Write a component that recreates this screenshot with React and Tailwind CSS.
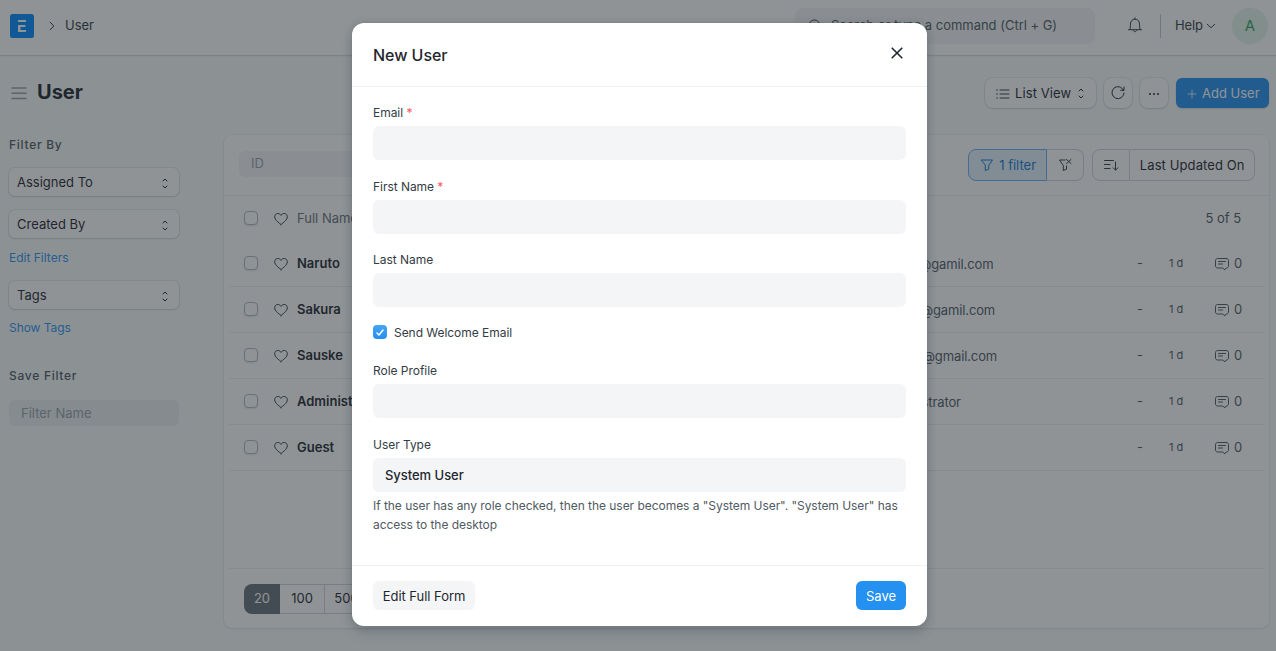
import React from "react";

const users = [
  { name: "Naruto", id: "naruto@gamil.com" },
  { name: "Sakura", id: "sakura@gamil.com" },
  { name: "Sauske", id: "sauske@gmail.com" },
  { name: "Administrator", id: "Administrator" },
  { name: "Guest", id: "" },
];

function Icon({ children, className = "", size = 16, box = "0 0 16 16" }) {
  return (
    <svg
      width={size}
      height={size}
      viewBox={box}
      fill="none"
      stroke="currentColor"
      strokeLinecap="round"
      strokeLinejoin="round"
      className={"shrink-0 " + className}
    >
      {children}
    </svg>
  );
}

const SelectIcon = ({ className }) => (
  <Icon className={className} size={12} box="0 0 12 12">
    <path d="M4 4L6 2l2 2M4 9l2 2 2-2" />
  </Icon>
);

const Heart = () => (
  <Icon className="text-[#333c44]">
    <path d="M8 13.500C6 11.800 1.700 9.200 1.700 5.700C1.700 3.700 3.100 2.500 4.800 2.500C6.200 2.500 7.300 3.100 8 4.400C8.700 3.100 9.800 2.500 11.200 2.500C12.900 2.500 14.300 3.700 14.300 5.700C14.300 9.200 10 11.800 8 13.500Z" />
  </Icon>
);

const Comment = () => (
  <Icon className="text-[#505a62]">
    <path d="M12.500 2.500H3.500C2.400 2.500 1.500 3.400 1.500 4.500v5.500C1.500 11.100 2.400 12 3.500 12H8.500L11 13.800L12 12H12.500C13.600 12 14.500 11.100 14.500 10v-5.500C14.500 3.400 13.600 2.500 12.500 2.500ZM4.500 5.500h7M4.500 8h4" />
  </Icon>
);

const Box = () => (
  <span className="mb-0.5 h-3.5 w-3.5 shrink-0 rounded border border-[#b3bac1] bg-white shadow-[0_1px_2px_rgba(0,0,0,0.1)]" />
);

const shadow = "shadow-[0_0_0_1px_rgba(25,39,52,0.08),0_1px_2px_rgba(25,39,52,0.13)]";

function SelectButton({ children, className = "" }) {
  return (
    <div className={"flex h-7 items-center justify-between rounded-md bg-white pl-2 pr-2 pt-px text-[13px] text-[#1f272e] " + shadow + " " + className}>
      <span className="pt-px">{children}</span>
      <SelectIcon />
    </div>
  );
}

function Navbar() {
  return (
    <header className="flex h-[55px] shrink-0 items-center bg-white pl-2.5 pr-2 pb-1 shadow-[0_1px_1px_rgba(0,0,0,0.12)]">
      <svg width="24" height="24" viewBox="0 0 24 24" className="shrink-0">
        <rect width="24" height="24" rx="2.500" fill="#0089ff" />
        <path d="M8 6h8v2H8zM8 11h7.500v2h-5v3H16v2H8z" fill="#fff" />
      </svg>
      <Icon className="ml-2.5 text-[#333c44]">
        <path d="M6.200 4.200L9.800 8l-3.600 3.800" />
      </Icon>
      <span className="ml-[5px] pt-px text-[13px] text-[#333c44]">User</span>
      <div className="ml-auto flex h-9 w-[300px] items-center rounded-lg bg-[#f4f5f6] pl-3">
        <Icon className="text-[#333c44]">
          <circle cx="7.500" cy="7.500" r="5.500" />
          <path d="M11.500 11.500L14 14" />
        </Icon>
        <span className="ml-2 whitespace-nowrap pt-px text-[13px] tracking-[-0.02px] text-[#505a62]">Search or type a command (Ctrl + G)</span>
      </div>
      <Icon className="ml-8 mb-0.5 text-[#333c44]">
        <path d="M1.500 12.700H14.500M3.200 12.500C3.200 10.500 3.400 9.500 3.500 7C3.600 4 5.300 2.200 8 2.200C10.700 2.200 12.400 4 12.500 7C12.600 9.500 12.800 10.500 12.800 12.500M6.300 13.300C6.800 15.300 9.200 15.300 9.700 13.300M8 2V.8" />
      </Icon>
      <span className="ml-[17px] h-6 w-px bg-[#c0c6cc]" />
      <span className="ml-3.5 w-7 whitespace-nowrap pt-px text-[13px] tracking-[-0.1px] text-[#333c44]">Help</span>
      <Icon size={12} box="0 0 12 12" className="ml-[2px] text-[#333c44]">
        <path d="M2.200 4.200L6 7.800l3.800-3.600" />
      </Icon>
      <div className="ml-[15px] flex h-9 w-9 items-center justify-center rounded-full bg-[#e4f5e9] pt-px text-[15px] text-[#38a160]">A</div>
    </header>
  );
}

function PageHead() {
  return (
    <div className="flex h-[76px] items-center pl-2.5 pr-[7px]">
      <svg width="18" height="14" viewBox="0 0 18 14" stroke="#98a1a9" strokeWidth="1.500" strokeLinecap="round">
        <path d="M2 2h14M2 7.200h14M2 12.400h14" />
      </svg>
      <h1 className="-mt-0.5 ml-[9px] text-[20px] font-bold text-[#1f272e]">User</h1>
      <div className={"ml-auto flex h-[30px] w-[111px] items-center rounded-lg bg-white pl-[10px] text-[13px] text-[#1f272e] " + shadow}>
        <Icon className="mt-px text-[#333c44]">
          <path d="M5 4h9M5 8h9M5 12h9" />
          <path d="M2 4h.01M2 8h.01M2 12h.01" strokeWidth="1.500" />
        </Icon>
        <span className="ml-1 pt-px tracking-[0.1px]">List View</span>
        <SelectIcon className="ml-1" />
      </div>
      <div className={"ml-2 flex h-[30px] w-7 items-center justify-center rounded-lg bg-white text-[#1f272e] " + shadow}>
        <Icon>
          <path d="M13.500 5.200A6 6 0 1 0 14 8M14 2v3.300h-3.300" />
        </Icon>
      </div>
      <div className={"ml-2 flex h-[30px] w-7 items-center justify-center rounded-lg bg-white pt-px text-[#1f272e] " + shadow}>
        <Icon>
          <path d="M4 8h.01M8 8h.01M12 8h.01" strokeWidth="2" />
        </Icon>
      </div>
      <div className="ml-2 flex h-[30px] w-[93px] items-center rounded-md bg-[#2490ef] pl-2 pt-px text-[13px] text-white shadow-[0_1px_2px_rgba(0,0,0,0.15)]">
        <Icon className="opacity-80">
          <path d="M8 4v8M4 8h8" />
        </Icon>
        <span className="ml-0.5 whitespace-nowrap pt-px">Add User</span>
      </div>
    </div>
  );
}

function Sidebar() {
  return (
    <aside className="w-[224px] shrink-0 pl-[9px] pt-[5px]">
      <div className="h-[18px] text-[12px] font-medium leading-[18px] tracking-[0.72px] text-[#505a62]">Filter By</div>
      <SelectButton className="mt-3.5 w-[170px]">Assigned To</SelectButton>
      <SelectButton className="mt-3.5 w-[170px]">Created By</SelectButton>
      <div className="mt-[11px] h-[18px] text-[12px] leading-[18px] text-[#2d95f0]">Edit Filters</div>
      <SelectButton className="mt-[14px] w-[170px]">Tags</SelectButton>
      <div className="mt-[10px] h-[18px] text-[12px] leading-[18px] tracking-[-0.05px] text-[#2d95f0]">Show Tags</div>
      <div className="mt-[30px] h-[18px] text-[12px] font-medium leading-[18px] tracking-[0.72px] text-[#505a62]">Save Filter</div>
      <div className="mt-[15px] flex h-[26px] w-[170px] items-center rounded-md bg-[#ebeef0] pl-3 pt-px text-[13px] text-[#98a1a9]">Filter Name</div>
    </aside>
  );
}

function ListCard() {
  return (
    <section className="mt-[4px] mr-[7px] flex h-[493px] grow flex-col rounded-lg bg-white shadow-[0_0_0_1px_rgba(25,39,52,0.04),0_1px_2px_rgba(25,39,52,0.08)]">
      <div className="flex h-[61px] shrink-0 items-center border-b border-[#ebeef0] px-[15px]">
        <div className="mb-[3px] flex h-[26px] w-[160px] items-center rounded-md bg-[#f4f5f6] pl-3 text-[13px] text-[#98a1a9]">ID</div>
        <div className="ml-auto flex h-8 text-[13px]">
          <div className="flex w-[79px] items-center rounded-l-lg border border-[#64b0f4] bg-[#e3f1fd] pl-2.5 text-[#1579d0]">
            <Icon>
              <path d="M2.500 3h11L9.700 8.500v3.700L6.300 13.500v-5z" />
            </Icon>
            <span className="ml-1 pt-px">1 filter</span>
          </div>
          <div className="flex w-[37px] items-center justify-center rounded-r-lg border border-l-0 border-[#d1d5d9] text-[#333c44]">
            <Icon>
              <path d="M8.200 3H2.500L6.300 8.500v5l3.200-1.300V9M9.500 2.500l4.500 4M14 2.500l-4.500 4" />
            </Icon>
          </div>
        </div>
        <div className="-mr-px ml-2 flex h-8 text-[13px] text-[#1f272e]">
          <div className="flex w-[38px] items-center justify-center rounded-l-lg border border-[#d1d5d9] text-[#333c44]">
            <Icon>
              <path d="M1.500 3.500h9M1.500 7.500h5.500M1.500 11.500h5.500M12.500 5v8M10.200 10.800l2.300 2.300 2.300-2.300" />
            </Icon>
          </div>
          <div className="flex w-[125px] items-center justify-center whitespace-nowrap rounded-r-lg border border-l-0 border-[#d1d5d9] pt-px tracking-[0.1px]">Last Updated On</div>
        </div>
      </div>
      <div className="mx-[5px] flex h-[45px] shrink-0 items-center pl-[15px] pr-[23px] text-[13px] text-[#687178]">
        <Box />
        <span className="ml-[15px] flex"><Heart /></span>
        <span className="ml-2">Full Name</span>
        <span className="ml-auto text-[#505a62]">5 of 5</span>
      </div>
      {users.map((u) => (
        <div key={u.name} className="mx-[5px] flex h-[46px] shrink-0 items-center border-b border-[#ebeef0] pl-[15px] pr-[22px] text-[13px] text-[#505a62]">
          <Box />
          <span className="ml-[15px] flex"><Heart /></span>
          <span className="ml-2 w-[583px] font-semibold text-[#1f272e]">{u.name}</span>
          <span className="w-[257px] pt-0.5 tracking-[-0.12px]">{u.id}</span>
          <span className="w-8">-</span>
          <span className="w-[45px] text-[11px]">1 d</span>
          <span className="ml-auto flex items-center gap-1">
            <Comment />
            <span>0</span>
          </span>
        </div>
      ))}
      <div className="mx-[5px] mt-auto flex h-[60px] items-center border-t border-[#ebeef0] pl-[15px] text-[13px] text-[#1f272e]">
        <div className="flex h-[30px]">
          <span className="flex w-[36px] items-center justify-center rounded-l-lg bg-[#687178] text-white">20</span>
          <span className="flex w-[45px] items-center justify-center border-y border-r border-[#d1d5d9]">100</span>
          <span className="flex w-11 items-center justify-center rounded-r-lg border-y border-r border-[#d1d5d9]">500</span>
        </div>
      </div>
    </section>
  );
}

function Field({ label, required, value, className = "" }) {
  return (
    <div className={className}>
      <div className="h-[18px] text-[12px] leading-[18px] text-[#333c44]">
        {label}
        {required && <span className="text-[#ff5858]"> *</span>}
      </div>
      <div className="mt-1 flex h-[34px] items-center rounded-md bg-[#f4f5f6] pl-3 pt-px text-[13px] font-medium text-[#1f272e]">{value}</div>
    </div>
  );
}

function NewUserDialog() {
  return (
    <div className="absolute inset-0 flex items-start justify-center bg-[#1f272e]/50 pl-[3px] pt-[23px]">
      <div role="dialog" className="flex h-[603px] w-[575px] flex-col rounded-xl bg-white tracking-[-0.04px] shadow-[0_8px_12px_rgba(25,39,52,0.12),0_1px_8px_rgba(25,39,52,0.2)]">
        <div className="flex h-16 shrink-0 items-center justify-between border-b border-[#f0f2f4] px-[21px]">
          <h2 className="text-[16px] font-medium text-[#1f272e]">New User</h2>
          <Icon size={18} box="0 0 18 18" className="-mt-1 text-[#1f272e]">
            <path d="M4.200 4.200l9.600 9.600M13.800 4.200l-9.600 9.600" strokeWidth="1.600" />
          </Icon>
        </div>
        <div className="grow px-[21px] pt-[17px]">
          <Field label="Email" required />
          <Field label="First Name" required className="mt-[18px]" />
          <Field label="Last Name" className="mt-[17px]" />
          <div className="mt-4 flex h-[18px] items-center">
            <span className="flex h-3.5 w-3.5 items-center justify-center rounded bg-gradient-to-b from-[#42a5f5] to-[#2490ef] text-white">
              <svg width="8" height="7" viewBox="0 0 8 7" fill="none" stroke="currentColor" strokeWidth="1.500" strokeLinecap="round" strokeLinejoin="round">
                <path d="M1 4l2 2 4-5" />
              </svg>
            </span>
            <span className="ml-[7px] pt-px text-[12px] text-[#333c44]">Send Welcome Email</span>
          </div>
          <Field label="Role Profile" className="mt-[21px]" />
          <Field label="User Type" value="System User" className="mt-[18px]" />
          <p className="mt-1 text-[12px] leading-[19px] text-[#505a62]">
            If the user has any role checked, then the user becomes a "System User". "System User" has access to the desktop
          </p>
        </div>
        <div className="flex h-[61px] shrink-0 items-center justify-between border-t border-[#f0f2f4] px-[21px] pb-px text-[13px]">
          <button className="h-[29px] w-[102px] rounded-md bg-[#f4f5f6] pt-0.5 text-[#1f272e]">Edit Full Form</button>
          <button className="h-[29px] w-[50px] rounded-md bg-[#2490ef] pt-0.5 text-white">Save</button>
        </div>
      </div>
    </div>
  );
}

export default function App() {
  return (
    <div className="relative flex h-[651px] w-[1276px] flex-col overflow-hidden bg-[#f9fafa] font-['Inter',sans-serif]">
      <Navbar />
      <PageHead />
      <div className="flex">
        <Sidebar />
        <ListCard />
      </div>
      <NewUserDialog />
    </div>
  );
}
